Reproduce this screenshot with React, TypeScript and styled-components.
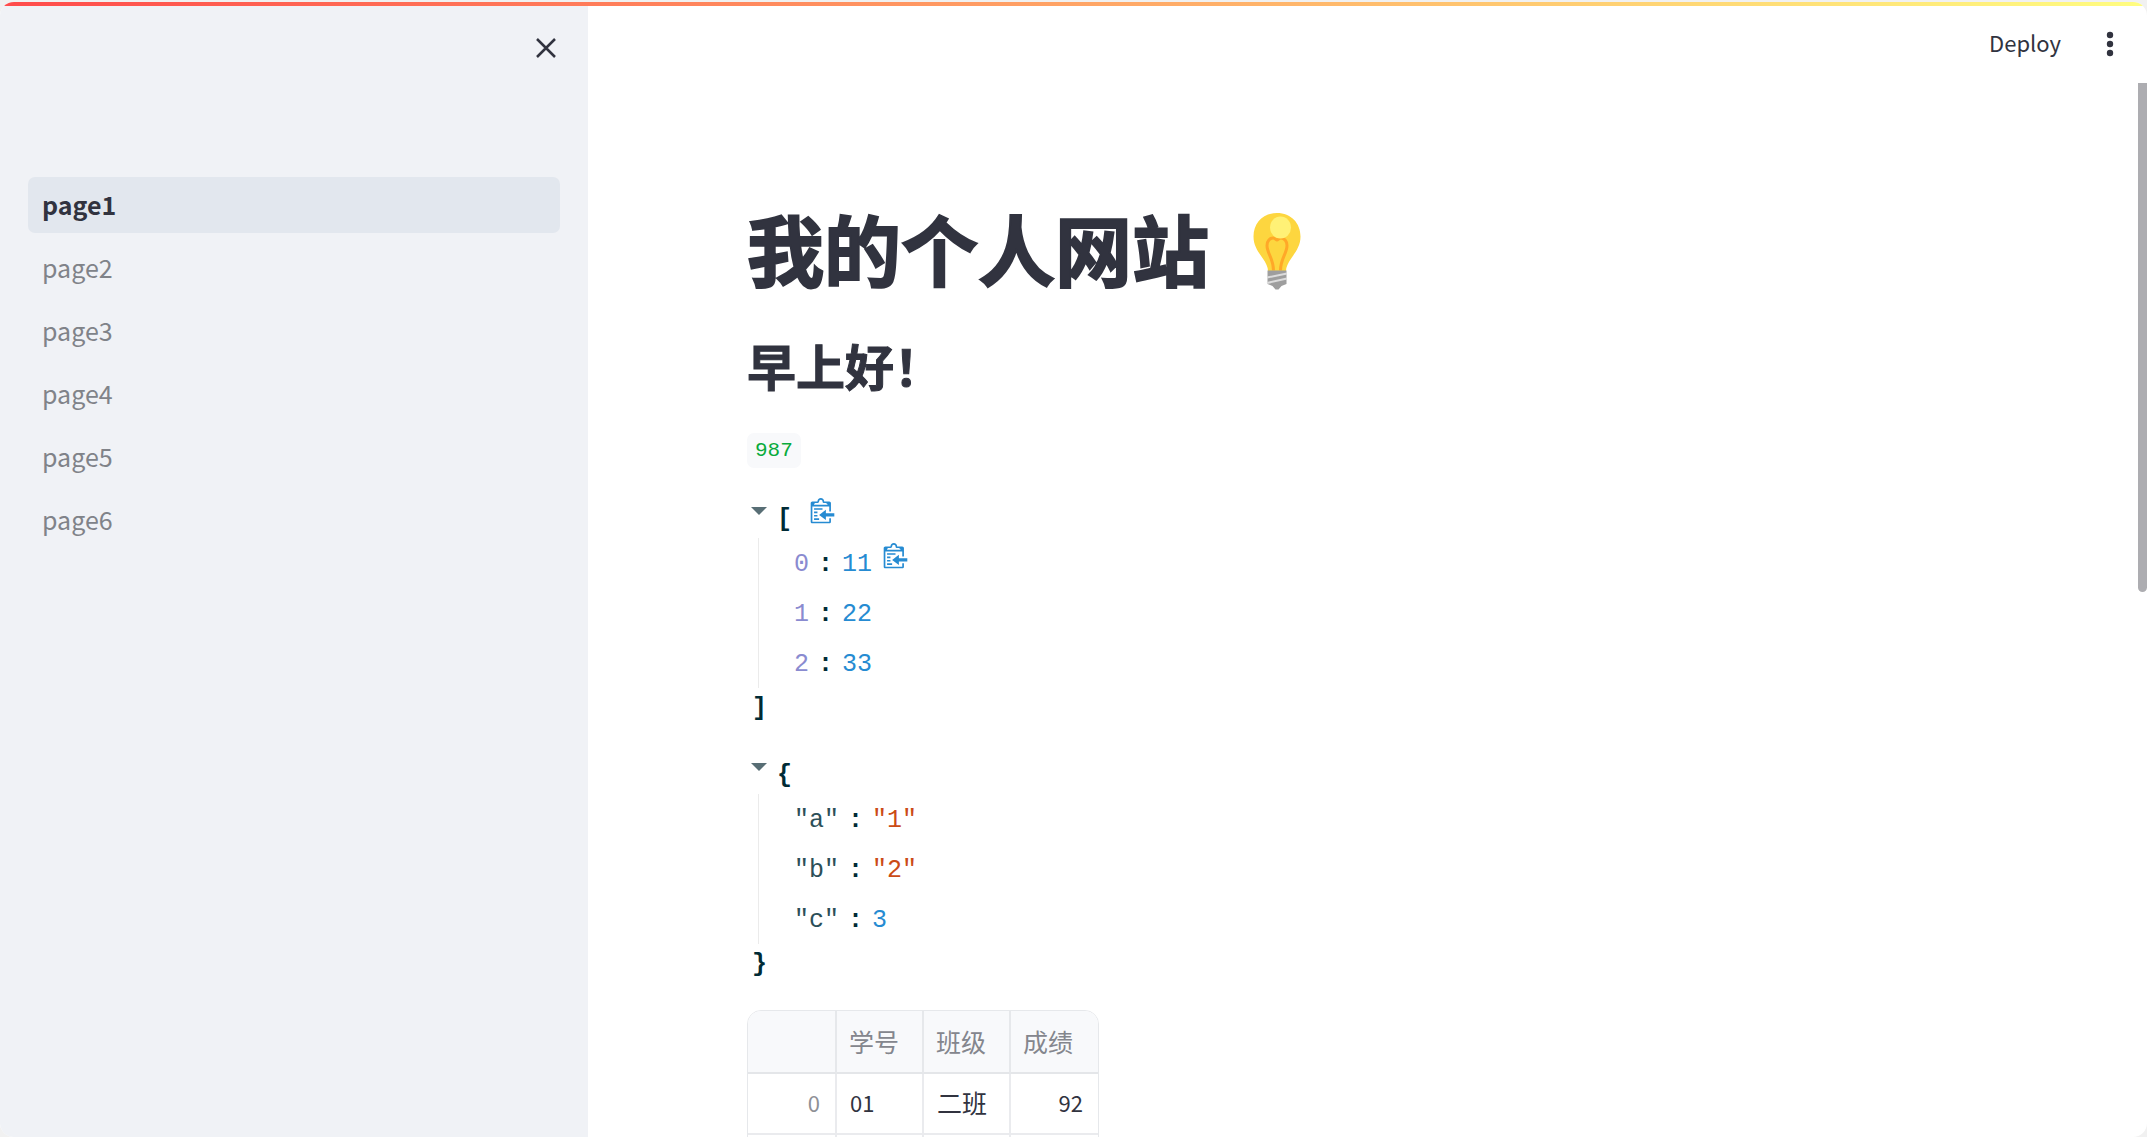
import React from "react";
import styled, { createGlobalStyle } from "styled-components";

const sans = `"Noto Sans CJK SC", "Noto Sans", sans-serif`;
const mono = `"Liberation Mono", "DejaVu Sans Mono", monospace`;
const ink = "#31333f";

const GlobalStyle = createGlobalStyle`
  * { box-sizing: border-box; }
  html, body { margin: 0; height: 100%; overflow: hidden; }
  body { background: #f1f1f1; color: ${ink}; font-family: ${sans}; }
  #root { height: 100%; }
`;

const Frame = styled.div`
  height: 100vh;
  padding-top: 2px;
  display: flex;
`;

const Shell = styled.div`
  flex: 1;
  min-width: 0;
  display: flex;
  flex-direction: column;
  overflow: hidden;
  background: #ffffff;
  border-radius: 14px;
`;

const Decoration = styled.div`
  flex: none;
  height: 4px;
  background: linear-gradient(90deg, #ff4b4b, #fffd80);
`;

const Columns = styled.div`
  flex: 1;
  min-height: 0;
  display: flex;
`;

const Sidebar = styled.aside`
  flex: none;
  width: 588px;
  padding: 21px 28px;
  background: #f0f2f6;
`;

const SidebarHeader = styled.div`
  display: flex;
  justify-content: flex-end;
  height: 150px;
`;

const IconButton = styled.button`
  display: flex;
  align-items: center;
  justify-content: center;
  width: 28px;
  height: 42px;
  padding: 0;
  border: 0;
  background: transparent;
  color: ${ink};
  cursor: pointer;
`;

const NavList = styled.ul`
  display: flex;
  flex-direction: column;
  gap: 7px;
  margin: 0;
  padding: 0;
  list-style: none;
`;

const NavLink = styled.a<{ $active: boolean }>`
  display: block;
  padding: 0 14px 2px;
  border-radius: 7px;
  font-size: 25px;
  line-height: 54px;
  text-decoration: none;
  font-weight: ${(p) => (p.$active ? 600 : 400)};
  color: ${(p) => (p.$active ? ink : "#808389")};
  background: ${(p) => (p.$active ? "#e2e7ee" : "transparent")};
`;

const Main = styled.main`
  position: relative;
  flex: 1;
  min-width: 0;
  display: flex;
  flex-direction: column;
  padding-right: 9px;
  overflow: hidden;
`;

const Toolbar = styled.header`
  flex: none;
  display: flex;
  align-items: center;
  justify-content: flex-end;
  gap: 35px;
  height: 77px;
  padding: 0 14px 2px 0;
`;

const DeployButton = styled.button`
  padding: 0 0 4px;
  border: 0;
  background: transparent;
  color: ${ink};
  font-family: ${sans};
  font-size: 22px;
  line-height: 36px;
  cursor: pointer;
`;

const ScrollThumb = styled.div`
  position: absolute;
  top: 77px;
  right: 0;
  width: 9px;
  height: 45%;
  border-radius: 0 0 5px 5px;
  background: #adadb1;
`;

const Content = styled.div`
  width: 100%;
  max-width: 1288px;
  margin: 0 auto;
  padding: 119px 28px 0;
`;

const Title = styled.h1`
  display: flex;
  align-items: flex-end;
  gap: 44px;
  margin: 0;
  font-size: 77px;
  font-weight: 700;
  line-height: 92px;
  -webkit-text-stroke: 2px ${ink};

  svg { margin-bottom: 4px; }
`;

const Subtitle = styled.h2`
  margin: 42px 0 0;
  font-size: 49px;
  font-weight: 700;
  line-height: 58px;
  -webkit-text-stroke: 1px ${ink};
`;

const Code = styled.code`
  display: block;
  width: fit-content;
  margin-top: 39px;
  padding: 0 8px;
  border-radius: 7px;
  background: #f8f9fb;
  color: #09ab3b;
  font-family: ${mono};
  font-size: 21px;
  line-height: 35px;
`;

const Tree = styled.div`
  margin-top: 28px;
  font-family: ${mono};
  font-size: 25px;
  line-height: 30px;
  color: #002b36;
`;

const TreeHead = styled.div`
  display: flex;
  align-items: flex-start;
  height: 42px;
  padding-left: 4px;
`;

const Toggle = styled.button`
  display: flex;
  width: 16px;
  height: 30px;
  margin-right: 10px;
  padding: 11px 0 0;
  border: 0;
  background: transparent;
  cursor: pointer;
`;

const Brace = styled.span<{ $end?: boolean }>`
  display: block;
  padding: ${(p) => (p.$end ? "6px 0 0 5px" : "9px 0 0")};
  font-weight: 700;
`;

const CopyButton = styled.button<{ $head?: boolean }>`
  display: flex;
  margin-left: ${(p) => (p.$head ? "17px" : "10px")};
  padding: ${(p) => (p.$head ? "2px 0 0" : "0 0 16px")};
  border: 0;
  background: transparent;
  color: #268bd2;
  cursor: pointer;
`;

const Entries = styled.div`
  margin-left: 11px;
  padding-left: 35px;
  border-left: 1px solid #ebebeb;
`;

const Entry = styled.div`
  display: flex;
  align-items: center;
  height: 50px;
  padding-top: 3px;
`;

const Key = styled.span<{ $index: boolean }>`
  color: ${(p) => (p.$index ? "#8a8bd0" : "#2c4f58")};
`;

const Colon = styled.span`
  margin: 0 9px;
  font-weight: 700;
`;

const Value = styled.span<{ $text: boolean }>`
  color: ${(p) => (p.$text ? "#cb4b16" : "#268bd2")};
`;

const TableBox = styled.div`
  width: fit-content;
  margin-top: 30px;
  border: 1px solid #e6e8eb;
  border-radius: 14px;
  overflow: hidden;
`;

const Table = styled.table`
  border-collapse: separate;
  border-spacing: 0;
  table-layout: fixed;
  font-size: 25px;
  line-height: 36px;
`;

const HeadCell = styled.th<{ $first?: boolean }>`
  width: ${(p) => (p.$first ? "89px" : "87px")};
  height: 63px;
  padding: 0 12px 2px;
  border-bottom: 2px solid #e4e6e9;
  border-right: 2px solid #e6e8eb;
  background: #f8f9fb;
  color: #84868d;
  font-weight: 400;
  text-align: left;
  &:last-child { border-right: 0; }
`;

const Cell = styled.td<{ $right?: boolean; $muted?: boolean; $latin?: boolean }>`
  height: 61px;
  padding: 0 ${(p) => (p.$right ? "15px" : "13px")} 3px 13px;
  border-bottom: 2px solid #eaebee;
  border-right: 2px solid #eaebee;
  text-align: ${(p) => (p.$right ? "right" : "left")};
  color: ${(p) => (p.$muted ? "#8e9096" : ink)};
  font-size: ${(p) => (p.$latin ? "22px" : "25px")};
  &:last-child { border-right: 0; }
`;

const Clipboard = () => (
  <svg width="27" height="27" viewBox="0 0 40 40" fill="currentColor" aria-hidden="true">
    <path d="m30 35h-25v-22.5h25v7.5h2.5v-12.5c0-1.4-1.1-2.5-2.5-2.5h-7.5c0-2.8-2.2-5-5-5s-5 2.2-5 5h-7.5c-1.4 0-2.5 1.1-2.5 2.5v27.5c0 1.4 1.1 2.5 2.5 2.5h25c1.4 0 2.5-1.1 2.5-2.5v-5h-2.5v5z m-20-27.5h2.5s2.5-1.1 2.5-2.5 1.1-2.5 2.5-2.5 2.5 1.1 2.5 2.5 1.3 2.5 2.5 2.5h2.5s2.5 1.1 2.5 2.5h-20c0-1.5 1.1-2.5 2.5-2.5z m-2.5 20h5v-2.5h-5v2.5z m17.5-5v-5l-10 7.5 10 7.5v-5h12.5v-5h-12.5z m-17.5 10h7.5v-2.5h-7.5v2.5z m12.5-17.5h-12.5v2.5h12.5v-2.5z m-7.5 5h-5v2.5h5v-2.5z" />
  </svg>
);

const Bulb = () => (
  <svg width="48" height="77" viewBox="0 0 48 77" role="img" aria-label="light bulb">
    <path d="M24 0C10 0 .5 10 .5 23.500c0 9 4.500 15 9 21.500 3.500 5 5.500 9 5.500 13h18c0-4 2-8 5.500-13 4.500-6.500 9-12.500 9-21.500C47.500 10 38 0 24 0z" fill="#fdd63f" />
    <path d="M20.500 57.500c0-12-6.500-17-6.500-25 0-4.500 3-7.500 6-7.500 2.500 0 3 2 4 2s1.500-2 4-2c3 0 6 3 6 7.500 0 8-6.500 13-6.500 25" fill="none" stroke="#ffa828" strokeWidth="3" />
    <ellipse cx="27.500" cy="14.500" rx="10.500" ry="11" fill="#fff176" />
    <path d="M14.500 57.500h19V71l-5 2-3 3.500h-3L19.500 73l-5-2z" fill="#9e9e9e" />
    <path d="M14 64.500l20-4M14 70l20-4.500" stroke="#dcdcdc" strokeWidth="2" />
  </svg>
);

const pages = ["page1", "page2", "page3", "page4", "page5", "page6"];

type Item = { name: string; value: string; copy?: boolean };

const listItems: Item[] = [
  { name: "0", value: "11", copy: true },
  { name: "1", value: "22" },
  { name: "2", value: "33" },
];

const dictItems: Item[] = [
  { name: '"a"', value: '"1"' },
  { name: '"b"', value: '"2"' },
  { name: '"c"', value: "3" },
];

function JsonTree({ open, close, items, copy }: { open: string; close: string; items: Item[]; copy?: boolean }) {
  return (
    <Tree>
      <TreeHead>
        <Toggle aria-label="Collapse">
          <svg width="16" height="8" viewBox="0 0 16 8" aria-hidden="true">
            <path d="M0 0h16L8 8z" fill="#586e75" />
          </svg>
        </Toggle>
        <Brace>{open}</Brace>
        {copy && (
          <CopyButton $head aria-label="Copy list">
            <Clipboard />
          </CopyButton>
        )}
      </TreeHead>
      <Entries>
        {items.map((item) => (
          <Entry key={item.name}>
            <Key $index={!item.name.startsWith('"')}>{item.name}</Key>
            <Colon>:</Colon>
            <Value $text={item.value.startsWith('"')}>{item.value}</Value>
            {item.copy && (
              <CopyButton aria-label="Copy value">
                <Clipboard />
              </CopyButton>
            )}
          </Entry>
        ))}
      </Entries>
      <Brace $end>{close}</Brace>
    </Tree>
  );
}

export default function App() {
  return (
    <Frame>
      <GlobalStyle />
      <Shell>
        <Decoration />
        <Columns>
          <Sidebar>
            <SidebarHeader>
              <IconButton aria-label="Close sidebar">
                <svg width="20" height="20" viewBox="0 0 20 20" aria-hidden="true">
                  <path d="M1 1l18 18M19 1L1 19" stroke="currentColor" strokeWidth="2.500" />
                </svg>
              </IconButton>
            </SidebarHeader>
            <nav aria-label="Pages">
              <NavList>
                {pages.map((page, i) => (
                  <li key={page}>
                    <NavLink href={`#${page}`} $active={i === 0}>
                      {page}
                    </NavLink>
                  </li>
                ))}
              </NavList>
            </nav>
          </Sidebar>
          <Main>
            <Toolbar>
              <DeployButton>Deploy</DeployButton>
              <IconButton aria-label="Main menu">
                <svg width="8" height="26" viewBox="0 0 8 26" fill="currentColor" aria-hidden="true">
                  <circle cx="4" cy="4" r="3.200" />
                  <circle cx="4" cy="13" r="3.200" />
                  <circle cx="4" cy="22" r="3.200" />
                </svg>
              </IconButton>
            </Toolbar>
            <Content>
              <Title>
                我的个人网站
                <Bulb />
              </Title>
              <Subtitle>早上好！</Subtitle>
              <Code>987</Code>
              <JsonTree open="[" close="]" items={listItems} copy />
              <JsonTree open="{" close="}" items={dictItems} />
              <TableBox>
                <Table>
                  <thead>
                    <tr>
                      <HeadCell $first aria-label="Index" />
                      <HeadCell>学号</HeadCell>
                      <HeadCell>班级</HeadCell>
                      <HeadCell>成绩</HeadCell>
                    </tr>
                  </thead>
                  <tbody>
                    <tr>
                      <Cell $right $muted $latin>0</Cell>
                      <Cell $latin>01</Cell>
                      <Cell>二班</Cell>
                      <Cell $right $latin>92</Cell>
                    </tr>
                    <tr>
                      <Cell />
                      <Cell />
                      <Cell />
                      <Cell />
                    </tr>
                  </tbody>
                </Table>
              </TableBox>
            </Content>
            <ScrollThumb />
          </Main>
        </Columns>
      </Shell>
    </Frame>
  );
}
